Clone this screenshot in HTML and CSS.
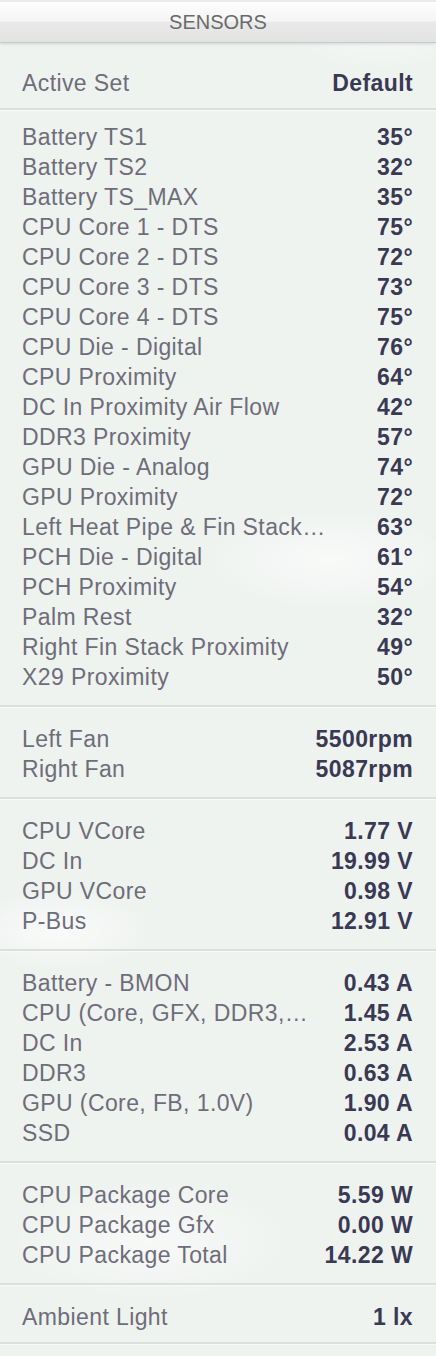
FILE: index.html
```html
<!DOCTYPE html>
<html lang="en">
<head>
    <meta charset="UTF-8">
    <meta name="viewport" content="width=device-width, initial-scale=1.0">
    <title>Sensors</title>
    <link rel="stylesheet" href="styles.css">
</head>
<body>
    <div class="sensors-panel">
        <div class="panel-header">SENSORS</div>

        <div class="sensor-group group-active">
            <div class="sensor-row"><span class="sensor-name">Active Set</span><span class="sensor-value">Default</span></div>
        </div>

        <div class="sensor-group group-temps">
            <div class="sensor-row"><span class="sensor-name">Battery TS1</span><span class="sensor-value">35°</span></div>
            <div class="sensor-row"><span class="sensor-name">Battery TS2</span><span class="sensor-value">32°</span></div>
            <div class="sensor-row"><span class="sensor-name">Battery TS_MAX</span><span class="sensor-value">35°</span></div>
            <div class="sensor-row"><span class="sensor-name">CPU Core 1 - DTS</span><span class="sensor-value">75°</span></div>
            <div class="sensor-row"><span class="sensor-name">CPU Core 2 - DTS</span><span class="sensor-value">72°</span></div>
            <div class="sensor-row"><span class="sensor-name">CPU Core 3 - DTS</span><span class="sensor-value">73°</span></div>
            <div class="sensor-row"><span class="sensor-name">CPU Core 4 - DTS</span><span class="sensor-value">75°</span></div>
            <div class="sensor-row"><span class="sensor-name">CPU Die - Digital</span><span class="sensor-value">76°</span></div>
            <div class="sensor-row"><span class="sensor-name">CPU Proximity</span><span class="sensor-value">64°</span></div>
            <div class="sensor-row"><span class="sensor-name">DC In Proximity Air Flow</span><span class="sensor-value">42°</span></div>
            <div class="sensor-row"><span class="sensor-name">DDR3 Proximity</span><span class="sensor-value">57°</span></div>
            <div class="sensor-row"><span class="sensor-name">GPU Die - Analog</span><span class="sensor-value">74°</span></div>
            <div class="sensor-row"><span class="sensor-name">GPU Proximity</span><span class="sensor-value">72°</span></div>
            <div class="sensor-row"><span class="sensor-name">Left Heat Pipe &amp; Fin Stack…</span><span class="sensor-value">63°</span></div>
            <div class="sensor-row"><span class="sensor-name">PCH Die - Digital</span><span class="sensor-value">61°</span></div>
            <div class="sensor-row"><span class="sensor-name">PCH Proximity</span><span class="sensor-value">54°</span></div>
            <div class="sensor-row"><span class="sensor-name">Palm Rest</span><span class="sensor-value">32°</span></div>
            <div class="sensor-row"><span class="sensor-name">Right Fin Stack Proximity</span><span class="sensor-value">49°</span></div>
            <div class="sensor-row"><span class="sensor-name">X29 Proximity</span><span class="sensor-value">50°</span></div>
        </div>

        <div class="sensor-group">
            <div class="sensor-row"><span class="sensor-name">Left Fan</span><span class="sensor-value">5500rpm</span></div>
            <div class="sensor-row"><span class="sensor-name">Right Fan</span><span class="sensor-value">5087rpm</span></div>
        </div>

        <div class="sensor-group">
            <div class="sensor-row"><span class="sensor-name">CPU VCore</span><span class="sensor-value">1.77 V</span></div>
            <div class="sensor-row"><span class="sensor-name">DC In</span><span class="sensor-value">19.99 V</span></div>
            <div class="sensor-row"><span class="sensor-name">GPU VCore</span><span class="sensor-value">0.98 V</span></div>
            <div class="sensor-row"><span class="sensor-name">P-Bus</span><span class="sensor-value">12.91 V</span></div>
        </div>

        <div class="sensor-group">
            <div class="sensor-row"><span class="sensor-name">Battery - BMON</span><span class="sensor-value">0.43 A</span></div>
            <div class="sensor-row"><span class="sensor-name">CPU (Core, GFX, DDR3,…</span><span class="sensor-value">1.45 A</span></div>
            <div class="sensor-row"><span class="sensor-name">DC In</span><span class="sensor-value">2.53 A</span></div>
            <div class="sensor-row"><span class="sensor-name">DDR3</span><span class="sensor-value">0.63 A</span></div>
            <div class="sensor-row"><span class="sensor-name">GPU (Core, FB, 1.0V)</span><span class="sensor-value">1.90 A</span></div>
            <div class="sensor-row"><span class="sensor-name">SSD</span><span class="sensor-value">0.04 A</span></div>
        </div>

        <div class="sensor-group">
            <div class="sensor-row"><span class="sensor-name">CPU Package Core</span><span class="sensor-value">5.59 W</span></div>
            <div class="sensor-row"><span class="sensor-name">CPU Package Gfx</span><span class="sensor-value">0.00 W</span></div>
            <div class="sensor-row"><span class="sensor-name">CPU Package Total</span><span class="sensor-value">14.22 W</span></div>
        </div>

        <div class="sensor-group group-last">
            <div class="sensor-row"><span class="sensor-name">Ambient Light</span><span class="sensor-value">1 lx</span></div>
        </div>
    </div>
</body>
</html>
```

FILE: styles.css
```css
/* Global Styles */
body {
    margin: 0;
    padding: 0;
    background-color: #eff3f0;
    background-image:
        radial-gradient(ellipse 90px 40px at 60px 930px, rgba(255, 255, 255, 0.7), transparent),
        radial-gradient(ellipse 120px 50px at 330px 560px, rgba(255, 255, 255, 0.6), transparent),
        radial-gradient(ellipse 140px 60px at 150px 1240px, rgba(255, 255, 255, 0.5), transparent),
        radial-gradient(ellipse 100px 50px at 380px 20px, rgba(255, 255, 255, 0.5), transparent);
    font-family: 'Liberation Sans', Arial, sans-serif;
    height: 1356px;
    overflow: hidden;
}

.sensors-panel {
    display: flex;
    flex-direction: column;
}

.panel-header {
    height: 40px;
    border-top: 2px solid #ebebeb;
    border-bottom: 1px solid #c8c9c8;
    background: linear-gradient(to bottom, #fdfdfd 0%, #f5f5f5 48%, #e9e9e9 50%, #e3e3e3 100%);
    box-shadow: 0 1px 3px rgba(0, 0, 0, 0.12);
    text-align: center;
    line-height: 40px;
    font-size: 20px;
    color: #6a6a6a;
}

/* Sensor groups */
.sensor-group {
    display: flex;
    flex-direction: column;
    padding: 17px 0 13px;
    border-bottom: 2px solid #dcdfdc;
    box-shadow: 0 1px 0 #f8faf8;
}

.group-active {
    padding: 25px 0 10px;
}

.group-temps {
    padding-top: 12px;
}

.group-last {
    padding-bottom: 10px;
}

.sensor-row {
    display: flex;
    justify-content: space-between;
    align-items: center;
    height: 30px;
    padding: 0 23px 0 22px;
    font-size: 23px;
    letter-spacing: 0.4px;
}

.sensor-name {
    color: #6e6d79;
    white-space: nowrap;
    overflow: hidden;
    text-overflow: ellipsis;
    max-width: 330px;
}

.sensor-value {
    color: #3a3954;
    font-weight: bold;
    white-space: nowrap;
}
```
